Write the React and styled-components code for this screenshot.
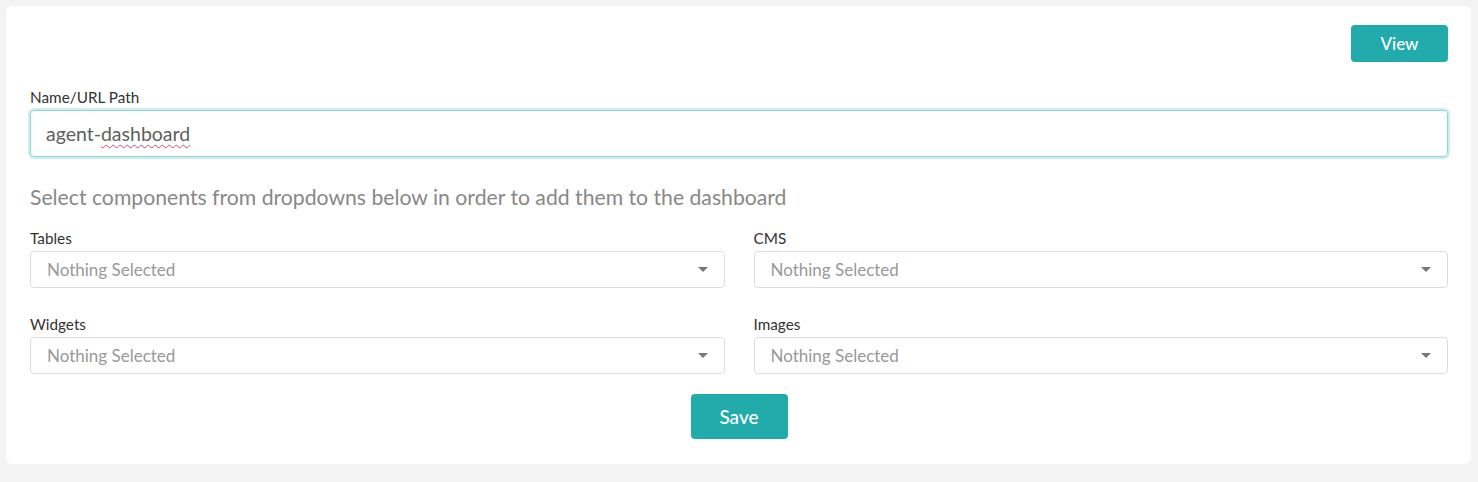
import React from "react";
import styled, { createGlobalStyle } from "styled-components";

const Global = createGlobalStyle`
  html, body { margin: 0; padding: 0; background: #f3f3f3; }
  body { font-family: Lato, "Open Sans", sans-serif; }
  * { box-sizing: border-box; }
`;

const Page = styled.div`
  padding: 6px 7px 19px 6px;
`;

const Card = styled.div`
  background: #fff;
  border-radius: 6px;
  padding: 19px 23px 25px 24px;
  display: flex;
  flex-direction: column;
`;

const TopBar = styled.div`
  display: flex;
  justify-content: flex-end;
`;

const Button = styled.button`
  font-family: Lato, sans-serif;
  background: #21abab;
  color: #fff;
  border: none;
  border-radius: 4px;
  width: 97px;
  height: ${(p) => p.$h}px;
  font-size: ${(p) => p.$fs}px;
  font-weight: 500;
  cursor: pointer;
  padding: 0;
`;

const Label = styled.div`
  font-size: 15.3px;
  color: #333;
  line-height: 18px;
  margin-bottom: 4px;
`;

const NameField = styled.div`
  margin-top: 26px;
`;

const TextInput = styled.div`
  height: 47px;
  border: 1px solid #8fd6d6;
  border-radius: 4px;
  box-shadow: 0 0 0 2px rgba(33, 171, 171, 0.22);
  display: flex;
  align-items: center;
  padding: 0 15px;
  font-size: 19.5px;
  color: #5f5f5f;
`;

const Squiggle = styled.span`
  text-decoration: underline wavy #d44a6a;
  text-decoration-thickness: 1px;
  text-underline-offset: 3px;
`;

const Hint = styled.div`
  font-size: 21.2px;
  color: #888;
  margin-top: 28px;
  line-height: 25px;
`;

const Grid = styled.div`
  display: grid;
  grid-template-columns: 1fr 1fr;
  column-gap: 29px;
  row-gap: 27px;
  margin-top: 19px;
`;

const Field = styled.div`
  display: flex;
  flex-direction: column;
`;

const Select = styled.div`
  height: 37px;
  border: 1px solid #ddd;
  border-radius: 4px;
  display: flex;
  align-items: center;
  justify-content: space-between;
  padding: 0 16px 0 16px;
  font-size: 17px;
  color: #999;
`;

const Caret = styled.span`
  width: 0;
  height: 0;
  border-left: 5px solid transparent;
  border-right: 5px solid transparent;
  border-top: 5px solid #777;
`;

const Footer = styled.div`
  display: flex;
  justify-content: center;
  margin-top: 20px;
`;

const fields = ["Tables", "CMS", "Widgets", "Images"];

export default function App() {
  return (
    <>
      <Global />
      <Page>
        <Card>
          <TopBar>
            <Button $h={37} $fs={17}>View</Button>
          </TopBar>
          <NameField>
            <Label>Name/URL Path</Label>
            <TextInput>
              agent-<Squiggle>dashboard</Squiggle>
            </TextInput>
          </NameField>
          <Hint>Select components from dropdowns below in order to add them to the dashboard</Hint>
          <Grid>
            {fields.map((f) => (
              <Field key={f}>
                <Label>{f}</Label>
                <Select>
                  <span>Nothing Selected</span>
                  <Caret />
                </Select>
              </Field>
            ))}
          </Grid>
          <Footer>
            <Button $h={45} $fs={19}>Save</Button>
          </Footer>
        </Card>
      </Page>
    </>
  );
}
